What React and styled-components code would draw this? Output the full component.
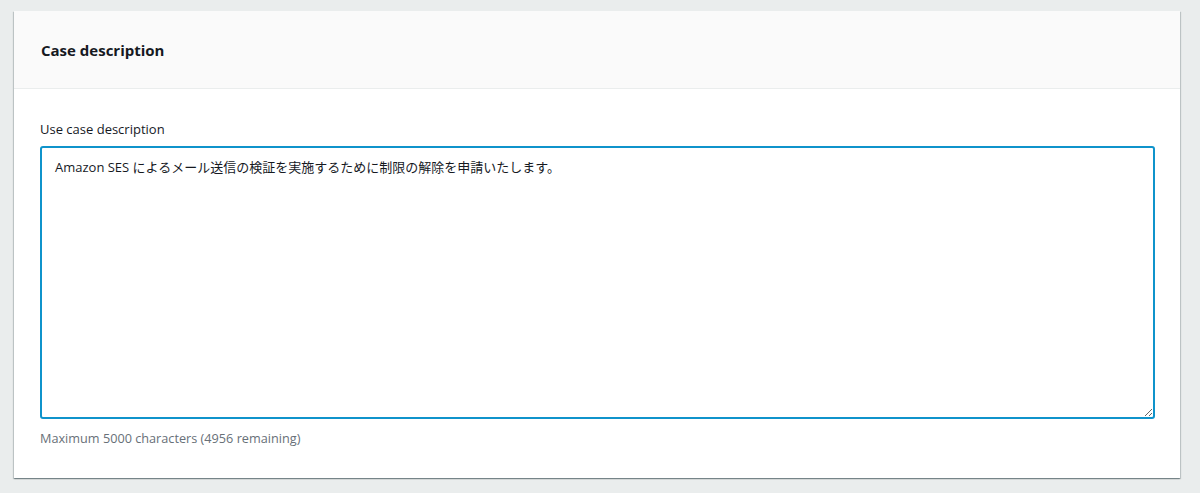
import styled, { createGlobalStyle } from "styled-components";
import { useState } from "react";

const MAX = 5000;

const GlobalStyle = createGlobalStyle`
  html, body {
    margin: 0;
    padding: 0;
    background: #eaeded;
    font-family: "Open Sans", "Noto Sans CJK JP", sans-serif;
    color: #16191f;
  }
`;

export default function App() {
  const [text, setText] = useState(
    "Amazon SES によるメール送信の検証を実施するために制限の解除を申請いたします。"
  );

  return (
    <Page>
      <GlobalStyle />
      <Card>
        <CardHeader>
          <Title>Case description</Title>
        </CardHeader>
        <CardBody>
          <Label htmlFor="use-case">Use case description</Label>
          <TextArea
            id="use-case"
            value={text}
            maxLength={MAX}
            onChange={(e) => setText(e.target.value)}
          />
          <Hint>
            Maximum {MAX} characters ({MAX - text.length} remaining)
          </Hint>
        </CardBody>
      </Card>
    </Page>
  );
}

const Page = styled.div`
  padding: 11px 20px 14px 14px;
`;

const Card = styled.section`
  background: #fff;
  box-shadow: 0 1px 1px 0 rgba(0, 28, 36, 0.3),
    1px 1px 1px 0 rgba(0, 28, 36, 0.15),
    -1px 1px 1px 0 rgba(0, 28, 36, 0.15);
`;

const CardHeader = styled.header`
  display: flex;
  align-items: center;
  height: 77px;
  padding: 0 27px;
  background: #fafafa;
  border-bottom: 1px solid #eaeded;
`;

const Title = styled.h2`
  margin: 0;
  font-size: 15px;
  font-weight: 700;
  line-height: 20px;
`;

const CardBody = styled.div`
  display: flex;
  flex-direction: column;
  padding: 31px 25px 31px 26px;
`;

const Label = styled.label`
  font-size: 13px;
  line-height: 18px;
  margin-bottom: 8px;
`;

const TextArea = styled.textarea`
  box-sizing: border-box;
  flex: none;
  width: 100%;
  height: 273px;
  padding: 9px 13px;
  border: 2px solid #0f93cb;
  border-radius: 3px;
  outline: none;
  font-family: "Open Sans", "Noto Sans CJK JP", sans-serif;
  font-size: 13px;
  line-height: 20px;
  color: #16191f;
  resize: both;
`;

const Hint = styled.p`
  margin: 10px 0 0;
  font-size: 12.7px;
  line-height: 18px;
  color: #687078;
`;
